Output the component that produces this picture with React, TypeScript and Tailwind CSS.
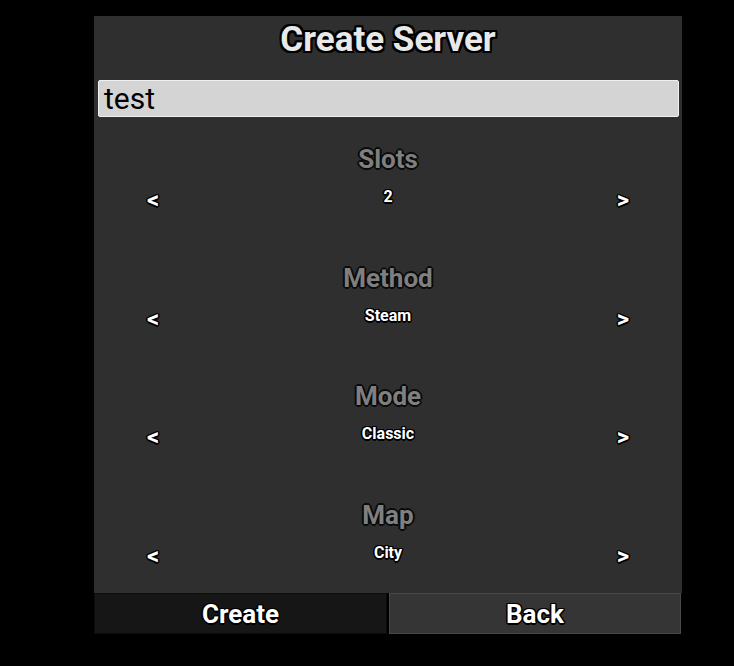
import React from "react";

const outline2 =
  "[text-shadow:-2px_-2px_0_#000,2px_-2px_0_#000,-2px_2px_0_#000,2px_2px_0_#000,0_-2px_0_#000,0_2px_0_#000,-2px_0_0_#000,2px_0_0_#000,-1px_-2px_0_#000,1px_-2px_0_#000,-1px_2px_0_#000,1px_2px_0_#000]";
const outline1 =
  "[text-shadow:-1px_-1px_0_#000,1px_-1px_0_#000,-1px_1px_0_#000,1px_1px_0_#000,0_-1.5px_0_#000,0_1.5px_0_#000,-1.5px_0_0_#000,1.5px_0_0_#000]";

function Selector({ label, value }: { label: string; value: string }) {
  return (
    <div className="h-[118.5px] flex flex-col pt-[27px]">
      <div
        className={`h-[30px] flex items-center justify-center text-[26px] font-bold text-[#7f7f7f] leading-none [text-shadow:-1px_-1px_0_#0a0a0a,1px_-1px_0_#0a0a0a,-1px_1px_0_#0a0a0a,1px_1px_0_#0a0a0a,0_-2px_0_#0a0a0a,0_2px_0_#0a0a0a,-2px_0_0_#0a0a0a,2px_0_0_#0a0a0a]`}
      >
        {label}
      </div>
      <div className="h-[46px] grid grid-cols-[98px_1fr_98px] items-center">
        <div className="flex justify-center pl-[20px] pt-[6px]">
          <span className={`text-[24px] font-bold text-white leading-none ${outline1}`}>&lt;</span>
        </div>
        <div className={`text-center text-[16px] font-bold text-white leading-none ${outline1}`}>
          {value}
        </div>
        <div className="flex justify-center pr-[20px] pt-[6px]">
          <span className={`text-[24px] font-bold text-white leading-none ${outline1}`}>&gt;</span>
        </div>
      </div>
    </div>
  );
}

export default function App() {
  return (
    <div className="w-[734px] h-[666px] bg-black pt-4 pl-[94px] font-['Roboto',sans-serif]">
      <div className="w-[588px] h-[577px] bg-[#2f2f2f] flex flex-col">
        <div
          className={`h-[46px] flex items-center justify-center text-[35px] font-bold text-[#e8e8e8] leading-none ${outline2}`}
        >
          Create Server
        </div>
        <div className="mt-[18px] px-[4px] pr-[3px]">
          <div className="h-[37px] bg-[#d4d4d4] border border-[#f0f0f0] rounded-[2px] flex items-center px-[5px] text-[30px] text-black leading-none">
            test
          </div>
        </div>
        <Selector label="Slots" value="2" />
        <Selector label="Method" value="Steam" />
        <Selector label="Mode" value="Classic" />
        <Selector label="Map" value="City" />
      </div>
      <div className="w-[588px] h-[41px] flex gap-[2px] bg-black">
        <div
          className={`w-[293px] h-full bg-[#161616] border border-[#0c0c0c] flex items-center justify-center pt-[2px] text-[26px] font-bold text-white ${outline1}`}
        >
          Create
        </div>
        <div
          className={`w-[292px] h-full bg-[#353535] border border-[#484848] flex items-center justify-center pt-[2px] text-[26px] font-bold text-white ${outline1}`}
        >
          Back
        </div>
      </div>
    </div>
  );
}
